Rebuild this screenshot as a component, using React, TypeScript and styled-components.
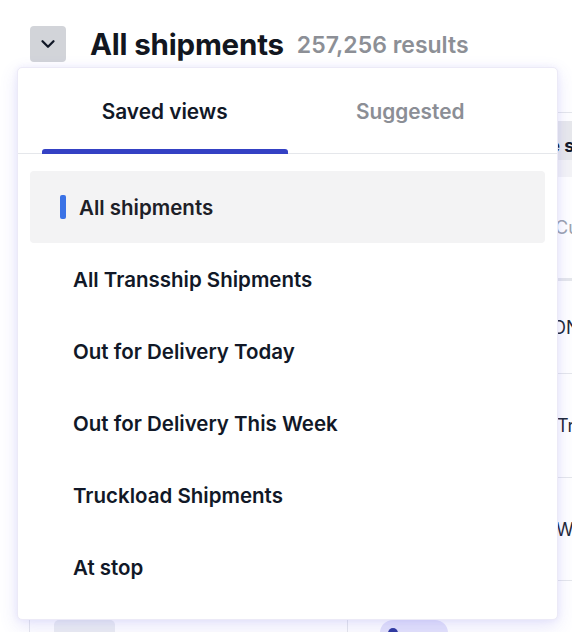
import React from "react";
import styled, { createGlobalStyle } from "styled-components";
import { ChevronDown } from "lucide-react";

const GlobalStyle = createGlobalStyle`
  html, body {
    margin: 0;
    padding: 0;
    background: #ffffff;
  }
  body {
    font-family: Inter, "Noto Sans", sans-serif;
    color: #111827;
    -webkit-font-smoothing: antialiased;
  }
`;

const Page = styled.div`
  position: relative;
  width: 572px;
  height: 632px;
  overflow: hidden;
`;

const Header = styled.div`
  display: flex;
  align-items: center;
  padding: 26px 0 0 30px;
  height: 36px;
`;

const ToggleButton = styled.button`
  display: flex;
  align-items: center;
  justify-content: center;
  width: 36px;
  height: 36px;
  padding: 0;
  border: none;
  border-radius: 4px;
  background: #d2d4d9;
  color: #111827;
`;

const Title = styled.h1`
  margin: 0 0 0 24px;
  font-size: 29.5px;
  font-weight: 700;
  letter-spacing: -0.2px;
  color: #121620;
`;

const Count = styled.span`
  margin-left: 13px;
  margin-top: 1px;
  font-size: 23px;
  font-weight: 600;
  color: #8c8f96;
`;

const Table = styled.div`
  margin: 50px 0 0 29px;
  width: 700px;
  border-top: 1px solid #e5e7eb;
  border-left: 1px solid #e5e7eb;
`;

const Row = styled.div<{ $height: number; $bg?: string; $border?: number }>`
  display: grid;
  grid-template-columns: 317px 150px 1fr;
  align-items: center;
  height: ${(p) => p.$height}px;
  background: ${(p) => p.$bg || "transparent"};
  border-bottom: ${(p) => (p.$border ? `${p.$border}px solid #e5e7eb` : "none")};
  box-sizing: border-box;
`;

const Cell = styled.div<{ $divider?: boolean; $pad?: number; $top?: number }>`
  height: 100%;
  display: flex;
  align-items: center;
  padding-left: ${(p) => p.$pad ?? 24}px;
  padding-top: ${(p) => p.$top ?? 0}px;
  border-left: ${(p) => (p.$divider ? "1px solid #e5e7eb" : "none")};
  box-sizing: border-box;
  white-space: nowrap;
`;

const HeadText = styled.span`
  font-size: 18px;
  font-weight: 700;
  color: #111827;
`;

const Placeholder = styled.span`
  font-size: 18px;
  color: #9ca3af;
`;

const CellText = styled.span`
  font-size: 18px;
  color: #1f2937;
`;

const Pill = styled.span<{ $tone: "gray" | "violet" }>`
  display: inline-flex;
  align-items: center;
  gap: 6px;
  width: ${(p) => (p.$tone === "gray" ? 61 : 68)}px;
  height: 26px;
  padding-left: 8px;
  border-radius: ${(p) => (p.$tone === "gray" ? 5 : 13)}px;
  background: ${(p) => (p.$tone === "gray" ? "#eceef2" : "#e4e3fb")};
  box-sizing: border-box;
`;

const Dot = styled.span`
  width: 10px;
  height: 10px;
  border-radius: 50%;
  background: #2f3a9e;
`;

const Popover = styled.div`
  position: absolute;
  top: 67px;
  left: 17px;
  width: 541px;
  height: 553px;
  box-sizing: border-box;
  background: #ffffff;
  border: 1px solid #eceaf7;
  border-radius: 5px;
  box-shadow: 0 6px 18px rgba(96, 88, 230, 0.16), 0 0 6px rgba(96, 88, 230, 0.08);
`;

const Tabs = styled.div`
  display: flex;
  padding: 0 24px;
  height: 85px;
  border-bottom: 1px solid #e5e7eb;
`;

const Tab = styled.div<{ $active?: boolean }>`
  flex: 1;
  display: flex;
  align-items: center;
  justify-content: center;
  position: relative;
  padding-top: 2px;
  font-size: 20.8px;
  font-weight: 600;
  color: ${(p) => (p.$active ? "#111827" : "#8b8e95")};

  &::after {
    content: "";
    display: ${(p) => (p.$active ? "block" : "none")};
    position: absolute;
    left: 0;
    right: 0;
    bottom: -1px;
    height: 5px;
    border-radius: 3px 3px 0 0;
    background: #3441c4;
  }
`;

const List = styled.ul`
  list-style: none;
  margin: 0;
  padding: 17px 12px 0;
`;

const Item = styled.li<{ $selected?: boolean }>`
  display: flex;
  align-items: center;
  gap: 13px;
  height: 72px;
  padding-left: ${(p) => (p.$selected ? 30 : 43)}px;
  border-radius: 4px;
  background: ${(p) => (p.$selected ? "#f3f3f4" : "transparent")};
  font-size: 20.5px;
  font-weight: 600;
  color: ${(p) => (p.$selected ? "#1d2027" : "#111827")};
`;

const Marker = styled.span`
  width: 6px;
  height: 24px;
  border-radius: 2px;
  background: #3a72e6;
`;

const views = [
  "All shipments",
  "All Transship Shipments",
  "Out for Delivery Today",
  "Out for Delivery This Week",
  "Truckload Shipments",
  "At stop",
];

export default function App() {
  return (
    <Page>
      <GlobalStyle />
      <Header>
        <ToggleButton aria-label="Switch view">
          <ChevronDown size={22} strokeWidth={2.5} />
        </ToggleButton>
        <Title>All shipments</Title>
        <Count>257,256 results</Count>
      </Header>

      <Table>
        <Row $height={8} />
        <Row $height={39} $bg="#e8e9ec">
          <Cell />
          <Cell />
          <Cell $pad={12} $top={10}>
            <HeadText>Route status</HeadText>
          </Cell>
        </Row>
        <Row $height={17} $bg="#f4f4f6" />
        <Row $height={104} $border={3}>
          <Cell />
          <Cell />
          <Cell $pad={58}>
            <Placeholder>Customer</Placeholder>
          </Cell>
        </Row>
        <Row $height={93} $border={1}>
          <Cell />
          <Cell $divider />
          <Cell $pad={56}>
            <CellText>DNX Logistics</CellText>
          </Cell>
        </Row>
        <Row $height={104} $border={1}>
          <Cell />
          <Cell $divider />
          <Cell $pad={60}>
            <CellText>Tri-State Freight</CellText>
          </Cell>
        </Row>
        <Row $height={103} $border={1}>
          <Cell />
          <Cell $divider />
          <Cell $pad={59}>
            <CellText>Westline Cargo</CellText>
          </Cell>
        </Row>
        <Row $height={104}>
          <Cell>
            <Pill $tone="gray" />
          </Cell>
          <Cell $divider $pad={32}>
            <Pill $tone="violet">
              <Dot />
            </Pill>
          </Cell>
          <Cell />
        </Row>
      </Table>

      <Popover>
        <Tabs>
          <Tab $active>Saved views</Tab>
          <Tab>Suggested</Tab>
        </Tabs>
        <List>
          {views.map((v, i) => (
            <Item key={v} $selected={i === 0}>
              {i === 0 && <Marker />}
              {v}
            </Item>
          ))}
        </List>
      </Popover>
    </Page>
  );
}
